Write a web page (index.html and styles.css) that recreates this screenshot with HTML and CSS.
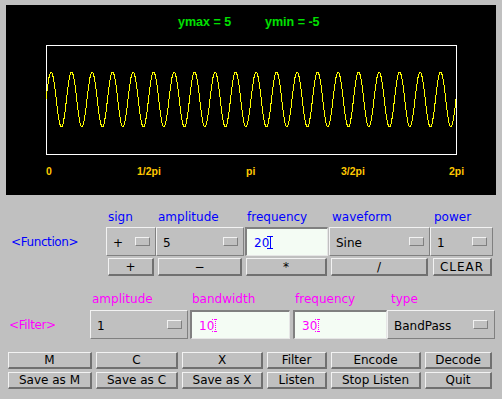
FILE: index.html
```html
<!DOCTYPE html>
<html lang="en">
<head>
    <meta charset="UTF-8">
    <meta name="viewport" content="width=device-width, initial-scale=1.0">
    <title>Wave Synth</title>
    <link rel="stylesheet" href="styles.css">
</head>
<body>
    <div class="app">
        <div class="scope">
            <svg class="plot" width="490" height="190" viewBox="0 0 490 190">
                <text class="range" x="172" y="21">ymax = 5</text>
                <text class="range" x="259" y="21">ymin = -5</text>
                <rect class="frame" x="40.5" y="40.5" width="410" height="109"/>
                <polyline class="wave" id="wave" points=""/>
                <text class="tick" x="40" y="170">0</text>
                <text class="tick" x="131" y="170">1/2pi</text>
                <text class="tick" x="240" y="170">pi</text>
                <text class="tick" x="335" y="170">3/2pi</text>
                <text class="tick" x="443" y="170">2pi</text>
            </svg>
        </div>

        <div class="fn-panel">
            <span></span>
            <span class="cap blue">sign</span>
            <span class="cap blue">amplitude</span>
            <span class="cap blue">frequency</span>
            <span class="cap blue">waveform</span>
            <span class="cap blue">power</span>

            <span class="tag blue">&lt;Function&gt;</span>
            <div class="choice">+</div>
            <div class="choice">5</div>
            <div class="field blue">20<svg class="caret" width="6" height="13" viewBox="0 0 6 13"><path d="M0 0.5H6M3 0V13M0 12.5H6"/></svg></div>
            <div class="choice">Sine</div>
            <div class="choice">1</div>

            <span></span>
            <button class="btn blue">+</button>
            <button class="btn blue">&minus;</button>
            <button class="btn blue">*</button>
            <button class="btn blue">/</button>
            <button class="btn blue clear">CLEAR</button>
        </div>

        <div class="flt-panel">
            <span></span>
            <span class="cap pink">amplitude</span>
            <span class="cap pink bw">bandwidth</span>
            <span class="cap pink fq">frequency</span>
            <span class="cap pink ty">type</span>

            <span class="tag pink">&lt;Filter&gt;</span>
            <div class="choice">1</div>
            <div class="field pink bw">10<svg class="caret ghost" width="6" height="13" viewBox="0 0 6 13"><path d="M0 0.5H6M3 0V13M0 12.5H6"/></svg></div>
            <div class="field pink fq">30<svg class="caret ghost" width="6" height="13" viewBox="0 0 6 13"><path d="M0 0.5H6M3 0V13M0 12.5H6"/></svg></div>
            <div class="choice type">BandPass</div>
        </div>

        <div class="cmd-panel">
            <button class="btn">M</button>
            <button class="btn">C</button>
            <button class="btn">X</button>
            <button class="btn">Filter</button>
            <button class="btn">Encode</button>
            <button class="btn">Decode</button>
            <button class="btn">Save as M</button>
            <button class="btn">Save as C</button>
            <button class="btn">Save as X</button>
            <button class="btn">Listen</button>
            <button class="btn">Stop Listen</button>
            <button class="btn">Quit</button>
        </div>
    </div>

    <script>
        // 20 periods of sin across the plot frame
        const wave = document.getElementById('wave');
        const pts = [];
        for (let x = 0; x <= 410; x++) {
            const y = 94.5 - 27.5 * Math.sin(2 * Math.PI * 20 * x / 410);
            pts.push((40 + x) + ',' + y.toFixed(1));
        }
        wave.setAttribute('points', pts.join(' '));
    </script>
</body>
</html>
```

FILE: styles.css
```css
* {
    box-sizing: border-box;
    margin: 0;
    padding: 0;
}
body {
    background: #c0c0c0;
    font-family: "DejaVu Sans", sans-serif;
    font-size: 12px;
}
.app {
    width: 502px;
    height: 399px;
    overflow: hidden;
    background: #c0c0c0;
}
.scope {
    margin: 5px 6px 0;
    width: 490px;
    height: 190px;
    background: #000;
}
.plot {
    display: block;
}
.plot .range {
    font-family: "Liberation Sans", Arial, sans-serif;
    font-weight: bold;
    font-size: 12.5px;
    fill: #00e000;
}
.plot .tick {
    font-family: "Liberation Sans", Arial, sans-serif;
    font-weight: bold;
    font-size: 10.5px;
    fill: #ffc800;
}
.plot .frame {
    fill: none;
    stroke: #fff;
    stroke-width: 1;
    shape-rendering: crispEdges;
}
.plot .wave {
    fill: none;
    stroke: #ffff00;
    stroke-width: 1;
    shape-rendering: crispEdges;
}

.blue { color: #0000ff; }
.pink { color: #ff00ff; }

.cap {
    line-height: 20px;
    padding-left: 2px;
}
.tag {
    align-self: center;
    letter-spacing: -0.4px;
}

.fn-panel {
    display: grid;
    grid-template-columns: 106px 50px 88px 85px 101px 63px;
    grid-template-rows: 20px 29px 20px;
    margin-top: 12px;
}
.fn-panel .tag {
    padding-left: 11px;
}
.fn-panel .cap:nth-child(4),
.fn-panel .cap:nth-child(5) {
    padding-left: 3px;
}
.fn-panel .cap:nth-child(6) {
    padding-left: 4px;
}
.fn-panel .btn {
    margin: 2px 2px 0;
}
.fn-panel .btn.clear {
    margin: 2px 1px 0 3px;
    letter-spacing: 1px;
}

.flt-panel {
    display: grid;
    grid-template-columns: 90px 98px 102px 97px 108px;
    grid-template-rows: 21px 29px;
    margin-top: 13px;
}
.flt-panel .tag {
    padding-left: 9px;
}
.flt-panel .cap.bw { padding-left: 4px; }
.flt-panel .cap.fq { padding-left: 5px; }
.flt-panel .cap.ty { padding-left: 4px; }
.flt-panel .field.bw { margin: 0 0 0 2px; }
.flt-panel .field.fq { margin: 0 0 0 3px; }

.choice {
    display: flex;
    align-items: center;
    justify-content: space-between;
    padding: 2px 5px 0 6px;
    border: 1px solid;
    border-color: #f2f2f2 #808080 #808080 #f2f2f2;
    background: #c0c0c0;
    color: #000;
}
.choice::after {
    content: "";
    width: 13px;
    height: 7px;
    border: 1px solid;
    border-color: #f2f2f2 #808080 #808080 #f2f2f2;
    margin-top: -2px;
}
.choice.type {
    padding-right: 6px;
}

.field {
    display: flex;
    align-items: center;
    margin: 0 1px;
    padding: 1px 0 0 7px;
    border-style: solid;
    border-width: 2px 1px 1px 2px;
    border-color: #808080 #e6e6e6 #e6e6e6 #808080;
    background: #f4fcf4;
}
.caret {
    margin-left: -2px;
    stroke: currentColor;
    stroke-width: 1;
    shape-rendering: crispEdges;
}
.caret.ghost {
    stroke-dasharray: 1 1;
}

.btn {
    font: inherit;
    background: #c0c0c0;
    color: #000;
    border-style: solid;
    border-width: 1px 2px 2px 1px;
    border-color: #f2f2f2 #707070 #707070 #f2f2f2;
    line-height: 1;
}

.cmd-panel {
    display: grid;
    grid-template-columns: 84px 82px 81px 60px 90px 67px;
    grid-template-rows: 17px 17px;
    column-gap: 4px;
    row-gap: 3px;
    padding-left: 8px;
    margin-top: 13px;
}
```
